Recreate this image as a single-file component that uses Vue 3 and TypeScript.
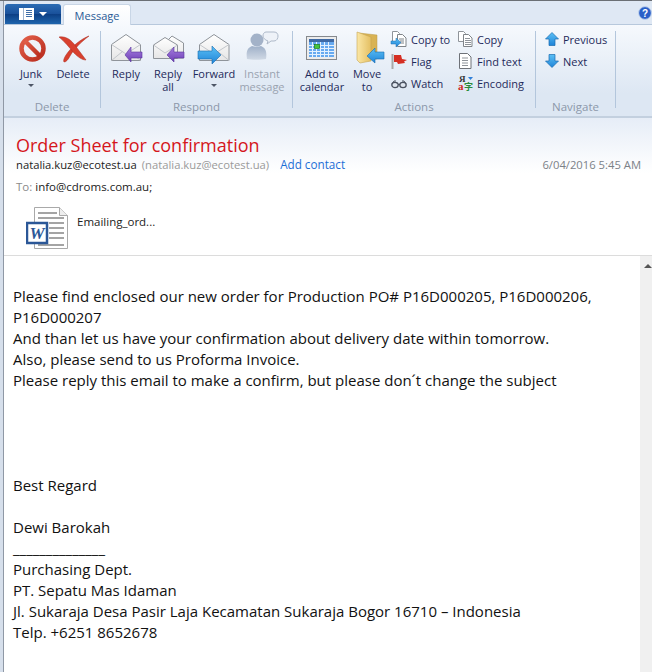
<script setup lang="ts">
const bodyTop = [
  'Please find enclosed our new order for Production PO# P16D000205, P16D000206,',
  'P16D000207',
  'And than let us have your confirmation about delivery date within tomorrow.',
  'Also, please send to us Proforma Invoice.',
  'Please reply this email to make a confirm, but please don\u00b4t change the subject',
]

const signature = [
  'Purchasing Dept.',
  'PT. Sepatu Mas Idaman',
  'Jl. Sukaraja Desa Pasir Laja Kecamatan Sukaraja Bogor 16710 \u2013 Indonesia',
  'Telp. +6251 8652678',
]
</script>

<template>
  <div class="window">
    <svg class="defs" width="0" height="0">
      <defs>
        <linearGradient id="env" x1="0" y1="0" x2="0" y2="1"><stop offset="0" stop-color="#ffffff" /><stop offset="1" stop-color="#e6e6e6" /></linearGradient>
        <linearGradient id="purple" x1="0" y1="0" x2="0" y2="1"><stop offset="0" stop-color="#a67ee0" /><stop offset="1" stop-color="#6d3fb5" /></linearGradient>
        <linearGradient id="blue" x1="0" y1="0" x2="0" y2="1"><stop offset="0" stop-color="#5cc0f5" /><stop offset="1" stop-color="#1f84d8" /></linearGradient>
        <linearGradient id="red" x1="0" y1="0" x2="1" y2="1"><stop offset="0" stop-color="#e2604a" /><stop offset="1" stop-color="#b92c1e" /></linearGradient>
        <linearGradient id="person" x1="0" y1="0" x2="0" y2="1"><stop offset="0" stop-color="#9fb0c8" /><stop offset="1" stop-color="#d0d9e5" /></linearGradient>
        <linearGradient id="folder" x1="0" y1="0" x2="1" y2="0"><stop offset="0" stop-color="#fbe7a6" /><stop offset="1" stop-color="#e4bf62" /></linearGradient>
      </defs>
    </svg>

    <div class="tabstrip">
      <button class="app-btn">
        <svg width="16" height="12" viewBox="0 0 16 12"><rect x="0" y="0" width="15" height="12" fill="#fff" /><rect x="4" y="0" width="1" height="12" fill="#9fb4cf" /><path d="M7 2.500h6M7 4.500h6M7 6.500h6M7 8.500h6" stroke="#3f6ea8" /></svg>
        <span class="app-caret"></span>
      </button>
      <div class="tab">Message</div>
      <svg class="help" width="14" height="14" viewBox="0 0 14 14">
        <circle cx="7" cy="7" r="6.400" fill="#2a5fc8" stroke="#c4d6ee" />
        <text x="7" y="10.600" text-anchor="middle" font-size="10" font-weight="700" fill="#fff" font-family="Liberation Sans, sans-serif">?</text>
      </svg>
    </div>

    <div class="ribbon">
      <section class="group group-delete">
        <div class="tools">
          <button class="big w-junk">
            <svg class="big-ic" width="28" height="28" viewBox="0 0 28 28">
              <circle cx="15.500" cy="14.500" r="11" fill="none" stroke="url(#red)" stroke-width="4.500" />
              <path d="M8 7l15 15" stroke="url(#red)" stroke-width="4.500" />
            </svg>
            <span>Junk</span>
            <i class="caret"></i>
          </button>
          <button class="big w-delete">
            <svg class="big-ic" width="32" height="28" viewBox="0 0 32 28">
              <path d="M32 2C24 5 15 12 9 21c-2 3-3 6-2 7 2 0 4-2 6-6C17 15 24 8 32 2z" fill="#d8402e" stroke="#a92a1e" stroke-width="0.500" />
              <path d="M2 3c6-1 11 2 15 7 4 5 8 11 12 16-4 0-8-3-12-7C12 13 7 7 2 3z" fill="#d8402e" stroke="#a92a1e" stroke-width="0.500" />
            </svg>
            <span>Delete</span>
          </button>
        </div>
        <div class="group-name">Delete</div>
      </section>

      <section class="group group-respond">
        <div class="tools">
          <button class="big w-reply">
            <svg class="big-ic" width="32" height="28" viewBox="0 0 32 28">
              <path d="M1.500 10.500L16 .5l14.500 10v16h-29z" fill="url(#env)" stroke="#8f949a" />
              <path d="M1.500 10.500L16 20l14.500-9.500M1.500 26.500l11-9M30.500 26.500l-11-9" fill="none" stroke="#c2c6cb" />
              <path d="M15 21l6-8v5h11v6H21v4z" fill="url(#purple)" stroke="#57329c" stroke-width="0.600" />
            </svg>
            <span>Reply</span>
          </button>
          <button class="big w-replyall">
            <svg class="big-ic" width="32" height="28" viewBox="0 0 32 28">
              <path d="M14 8l6-6 11.500 7v15H14z" fill="url(#env)" stroke="#8f949a" />
              <path d="M1.500 11L13 3.500 25.500 11v13.500h-24z" fill="url(#env)" stroke="#8f949a" />
              <path d="M1.500 11l11.500 8 12.500-8" fill="none" stroke="#c2c6cb" />
              <path d="M15 21l7-8v5h10v6H22v4z" fill="url(#purple)" stroke="#57329c" stroke-width="0.600" />
            </svg>
            <span>Reply<br />all</span>
          </button>
          <button class="big w-forward">
            <svg class="big-ic" width="32" height="28" viewBox="0 0 32 28">
              <path d="M1.500 10.500L16 .5l15 10v16h-29.500z" fill="url(#env)" stroke="#8f949a" />
              <path d="M1.500 10.500L16 20l15-9.500M31 26.500l-11-9" fill="none" stroke="#c2c6cb" />
              <path d="M0 17h14v-5l9 9-9 9v-5H0z" fill="url(#blue)" stroke="#1a6cb0" stroke-width="0.600" />
            </svg>
            <span>Forward</span>
            <i class="caret"></i>
          </button>
          <button class="big w-im disabled">
            <svg class="big-ic" width="32" height="28" viewBox="0 0 32 28">
              <circle cx="11" cy="6" r="6.500" fill="#a3b2c8" />
              <path d="M1 25c-1-7 0-11 5-13 3 1 6 1 9 0 5 2 6 6 5 13-4 1-15 1-19 0z" fill="url(#person)" />
              <path d="M20-2h8c3 0 4 2 4 4s-1 5-4 5h-3l-4 3 1-3c-3-1-5-3-5-5s1-4 3-4z" fill="#eef2f8" stroke="#aeb9c9" />
            </svg>
            <span>Instant<br />message</span>
          </button>
        </div>
        <div class="group-name">Respond</div>
      </section>

      <section class="group group-actions">
        <div class="tools">
          <button class="big w-cal">
            <svg class="big-ic" width="32" height="28" viewBox="0 0 32 28">
              <rect x="0.500" y="2.500" width="30" height="23" fill="#ececec" stroke="#85898e" />
              <rect x="3" y="5" width="25" height="3" fill="#3f6aa5" />
              <rect x="3" y="8" width="25" height="15" fill="#67aaf0" />
              <path d="M3 11.500h25M3 14.500h25M3 17.500h25M3 20.500h25M6.500 8v15M10.500 8v15M14.500 8v15M18.500 8v15M22.500 8v15" stroke="#e3f1ff" />
              <rect x="8.500" y="10.500" width="5" height="4" fill="#43c63e" stroke="#1d7a1d" stroke-width="0.700" />
            </svg>
            <span>Add to<br />calendar</span>
          </button>
          <button class="big w-move">
            <svg class="big-ic" width="32" height="28" viewBox="0 0 32 28">
              <path d="M8-1l18 2v24L9 26z" fill="#d9b354" stroke="#b99a4a" stroke-width="0.500" />
              <path d="M6-2l14 5v24L9 29l-3-3z" fill="url(#folder)" stroke="#c7a653" stroke-width="0.600" />
              <path d="M16 22l8-8v4h9v7h-9v4z" fill="url(#blue)" stroke="#1a6cb0" stroke-width="0.600" />
            </svg>
            <span>Move<br />to</span>
          </button>
          <div class="small-col col-a">
            <button class="small">
              <svg width="16" height="16" viewBox="0 0 16 16">
                <path d="M1.500.5h5l2 2v8h-7z" fill="#fff" stroke="#8f949a" />
                <path d="M6.500 3.500h5l3.500 3.500v8.500h-8.500z" fill="#fff" stroke="#7f8489" />
                <path d="M8 8h5M9 10h4M9 12h4" stroke="#7f8489" />
                <path d="M0 10h5V7l5 4.500L5 16v-3H0z" fill="url(#blue)" stroke="#1a6cb0" stroke-width=".5" />
              </svg>
              Copy to
            </button>
            <button class="small">
              <svg width="16" height="16" viewBox="0 0 16 16">
                <path d="M1.500 1v15" stroke="#a8a8a8" stroke-width="2" />
                <path d="M3 2h7l1 4 5 1-3 1.500 1 1.500-7 1-1-2H3z" fill="#d52f23" />
              </svg>
              Flag
            </button>
            <button class="small">
              <svg width="16" height="16" viewBox="0 0 16 16">
                <ellipse cx="4" cy="10" rx="3.200" ry="2.600" fill="#dfe6ef" stroke="#4a5260" stroke-width="1.300" />
                <ellipse cx="12" cy="10" rx="3.200" ry="2.600" fill="#dfe6ef" stroke="#4a5260" stroke-width="1.300" />
                <path d="M7 9.500h2M1 9l2-3h2M15 9l-2-3h-2" fill="none" stroke="#4a5260" />
              </svg>
              Watch
            </button>
          </div>
          <div class="small-col col-b">
            <button class="small">
              <svg width="15" height="16" viewBox="0 0 15 16">
                <path d="M.5.5h5l2 2v8h-7z" fill="#fff" stroke="#8f949a" />
                <path d="M5.500 3.500h5l3.500 3.500v8.500h-8.500z" fill="#fff" stroke="#7f8489" />
                <path d="M7 7.500h5M7 9.500h6M7 11.500h6M7 13.500h6" stroke="#8f949a" />
              </svg>
              Copy
            </button>
            <button class="small">
              <svg width="15" height="16" viewBox="0 0 15 16">
                <path d="M1.500.5h8l3.500 3.500v11.500H1.500z" fill="#fff" stroke="#6e7278" />
                <path d="M4 5h6M4 7.500h6M4 10h6M4 12.500h6" stroke="#8f949a" />
              </svg>
              Find text
            </button>
            <button class="small">
              <svg width="15" height="16" viewBox="0 0 15 16">
                <text x="1" y="7" class="enc-ya">Я</text>
                <text x="0" y="15" class="enc-a">a</text>
                <text x="6" y="15" class="enc-zi">字</text>
                <path d="M10 2h5l-2.500 3z" fill="#2f7fd8" />
              </svg>
              Encoding
            </button>
          </div>
        </div>
        <div class="group-name">Actions</div>
      </section>

      <section class="group group-nav">
        <div class="tools">
          <div class="small-col col-nav">
            <button class="small">
              <svg width="14" height="14" viewBox="0 0 14 14"><path d="M7 .5L13.500 7H10v6.500H4V7H.5z" fill="url(#blue)" stroke="#1a6cb0" stroke-width=".7" /></svg>
              Previous
            </button>
            <button class="small">
              <svg width="14" height="14" viewBox="0 0 14 14"><path d="M7 13.500L13.500 7H10V.5H4V7H.5z" fill="url(#blue)" stroke="#1a6cb0" stroke-width=".7" /></svg>
              Next
            </button>
          </div>
        </div>
        <div class="group-name">Navigate</div>
      </section>
    </div>

    <header class="head">
      <h1 class="subject">Order Sheet for confirmation</h1>
      <div class="from-row">
        <span class="from">natalia.kuz@ecotest.ua</span>
        <span class="from-addr">(natalia.kuz@ecotest.ua)</span>
        <a class="add-contact">Add contact</a>
        <span class="date">6/04/2016 5:45 AM</span>
      </div>
      <div class="to-row"><span class="to-label">To:</span> info@cdroms.com.au;</div>
      <div class="attach">
        <svg width="42" height="44" viewBox="0 0 42 44">
          <path d="M8.500 1.500h25l8 8v33h-33z" fill="#fff" stroke="#a9a9a9" />
          <path d="M33.500 1.500v8h8" fill="#eee" stroke="#a9a9a9" />
          <path d="M12 7h19M12 12h26M23 17h15M23 22h15M23 27h15M23 32h15M12 39h26" stroke="#a4a4a4" stroke-width="2" />
          <rect x="1" y="17" width="20" height="20" fill="#fff" stroke="#2b5797" stroke-width="2.500" />
          <text x="11" y="33" text-anchor="middle" class="word-w">W</text>
        </svg>
        <span class="attach-name">Emailing_ord...</span>
      </div>
    </header>

    <div class="content">
      <main class="body">
        <p v-for="line in bodyTop" :key="line">{{ line }}</p>
        <div class="spacer"></div>
        <p>Best Regard</p>
        <p class="blank"></p>
        <p>Dewi Barokah</p>
        <p>______________</p>
        <p v-for="line in signature" :key="line">{{ line }}</p>
      </main>
      <div class="scrollbar">
        <div class="sb-btn"><i></i></div>
      </div>
    </div>
  </div>
</template>

<style>
html, body { margin: 0; height: 100%; overflow: hidden; background: #fff; }
</style>

<style scoped>
.window {
  width: 652px;
  height: 672px;
  display: flex;
  flex-direction: column;
  overflow: hidden;
  border-top: 1px solid #6b6f75;
  padding-left: 4px;
  box-sizing: border-box;
  font-family: "Open Sans", "Noto Sans", sans-serif;
  color: #1e2a5a;
  background: linear-gradient(to right, #d6dfeb 3px, #8f98a5 3px) left top / 4px 100% no-repeat #fff;
}
.defs { position: absolute; }
button {
  border: none;
  background: none;
  padding: 0;
  font: inherit;
  color: inherit;
}

.tabstrip {
  height: 24px;
  display: flex;
  align-items: flex-end;
  background: #dfe8f4;
  border-bottom: 1px solid #b7c8dc;
  box-sizing: border-box;
  flex-shrink: 0;
}
.app-btn {
  width: 56px;
  height: 20px;
  margin-left: 1px;
  background: linear-gradient(#2b6cb4, #19509a 50%, #0c3f85 52%, #1f65ad);
  border-radius: 3px 3px 0 0;
  display: flex;
  align-items: center;
  justify-content: center;
  gap: 4px;
}
.app-caret {
  width: 0;
  height: 0;
  border: 4px solid transparent;
  border-top-color: #fff;
  border-bottom: none;
}
.tab {
  width: 68px;
  height: 21px;
  margin-left: 2px;
  margin-bottom: -1px;
  box-sizing: border-box;
  background: linear-gradient(#fff, #f6f9fd);
  border: 1px solid #c9d6e6;
  border-bottom: none;
  border-radius: 3px 3px 0 0;
  font-size: 11px;
  color: #2a5a96;
  display: flex;
  align-items: center;
  justify-content: center;
}
.help { margin-left: auto; margin-bottom: 4px; }

.ribbon {
  height: 91px;
  display: flex;
  background: linear-gradient(#f6f9fd, #dde7f3 75%);
  border-bottom: 2px solid #c3d0df;
  flex-shrink: 0;
}
.group {
  display: flex;
  flex-direction: column;
  flex-shrink: 0;
  border-right: 1px solid #b3c6dc;
  margin: 6px 0 8px;
  box-sizing: border-box;
}
.tools { flex: 1; display: flex; min-height: 0; }
.group-name {
  height: 14px;
  margin-bottom: -6px;
  line-height: 14px;
  text-align: center;
  font-size: 11.5px;
  color: #8c98aa;
}
.group-delete { width: 97px; }
.group-respond { width: 192px; }
.group-actions { width: 243px; }
.group-nav { width: 80px; }

.big {
  display: flex;
  flex-direction: column;
  align-items: center;
  padding-top: 3px;
  font-size: 11px;
  line-height: 13px;
  text-align: center;
  flex-shrink: 0;
}
.big-ic { overflow: visible; margin-bottom: 5px; flex-shrink: 0; }
.w-junk { width: 42px; margin-left: 6px; }
.w-delete { width: 42px; }
.w-reply { width: 42px; margin-left: 4px; }
.w-replyall { width: 42px; }
.w-forward { width: 50px; }
.w-im { width: 46px; }
.w-cal { width: 54px; margin-left: 2px; }
.w-move { width: 36px; }
.disabled { color: #9aa3b0; }
.caret {
  display: block;
  width: 0;
  height: 0;
  margin-top: 4px;
  border: 3.5px solid transparent;
  border-top: 3.5px solid #4d5666;
  border-bottom: none;
}
.small-col {
  display: flex;
  flex-direction: column;
  gap: 4px;
}
.col-a { width: 67px; margin-left: 6px; }
.col-b { width: 75px; }
.col-nav { padding-left: 9px; }
.small {
  height: 18px;
  padding-bottom: 2px;
  display: flex;
  align-items: center;
  gap: 4px;
  font-size: 11px;
  white-space: nowrap;
}
.small svg { overflow: visible; flex-shrink: 0; }
.enc-ya { font: 700 9px "Liberation Serif", serif; fill: #333; }
.enc-a { font: 700 11px "Liberation Serif", serif; fill: #d0281e; }
.enc-zi { font: 700 9px "Noto Sans CJK SC", sans-serif; fill: #2a8a3a; }

.head {
  height: 138px;
  padding: 15px 0 0 12px;
  box-sizing: border-box;
  background: linear-gradient(#e6edf7, #fff 55px);
  border-bottom: 1px solid #dcdcdc;
  flex-shrink: 0;
}
.subject {
  margin: 0;
  font-size: 18px;
  line-height: 24px;
  font-weight: 400;
  color: #d5161c;
}
.from-row {
  display: flex;
  align-items: baseline;
  margin-top: -2px;
  font-size: 11.25px;
  line-height: 18px;
  padding-right: 11px;
  color: #222;
}
.from-addr { margin-left: 5px; color: #9a9a9a; }
.add-contact { margin-left: 11px; font-size: 11.7px; color: #1d6fd6; }
.date { margin-left: auto; color: #7b8188; }
.to-row { font-size: 11.5px; line-height: 18px; margin-top: 4px; color: #222; }
.to-label { color: #8a8a8a; }
.attach {
  display: flex;
  align-items: flex-start;
  margin: 10px 0 0 10px;
  gap: 9px;
}
.attach-name { font-size: 11.5px; line-height: 16px; padding-top: 8px; color: #222; }
.word-w { font: italic 700 17px "Liberation Serif", serif; fill: #2b5797; }

.content { flex: 1; display: flex; min-height: 0; }
.body {
  flex: 1;
  padding: 30px 0 0 9px;
  font-size: 15px;
  line-height: 21px;
  color: #111;
  overflow: hidden;
}
.body p { margin: 0; white-space: nowrap; }
.spacer { height: 84px; }
.blank { height: 21px; }
.scrollbar { width: 12px; background: #f0f0f0; flex-shrink: 0; }
.sb-btn {
  height: 20px;
  display: flex;
  align-items: center;
  padding-left: 4px;
}
.sb-btn i {
  width: 0;
  height: 0;
  border: 4px solid transparent;
  border-bottom: 4px solid #555;
  border-top: none;
}
</style>
